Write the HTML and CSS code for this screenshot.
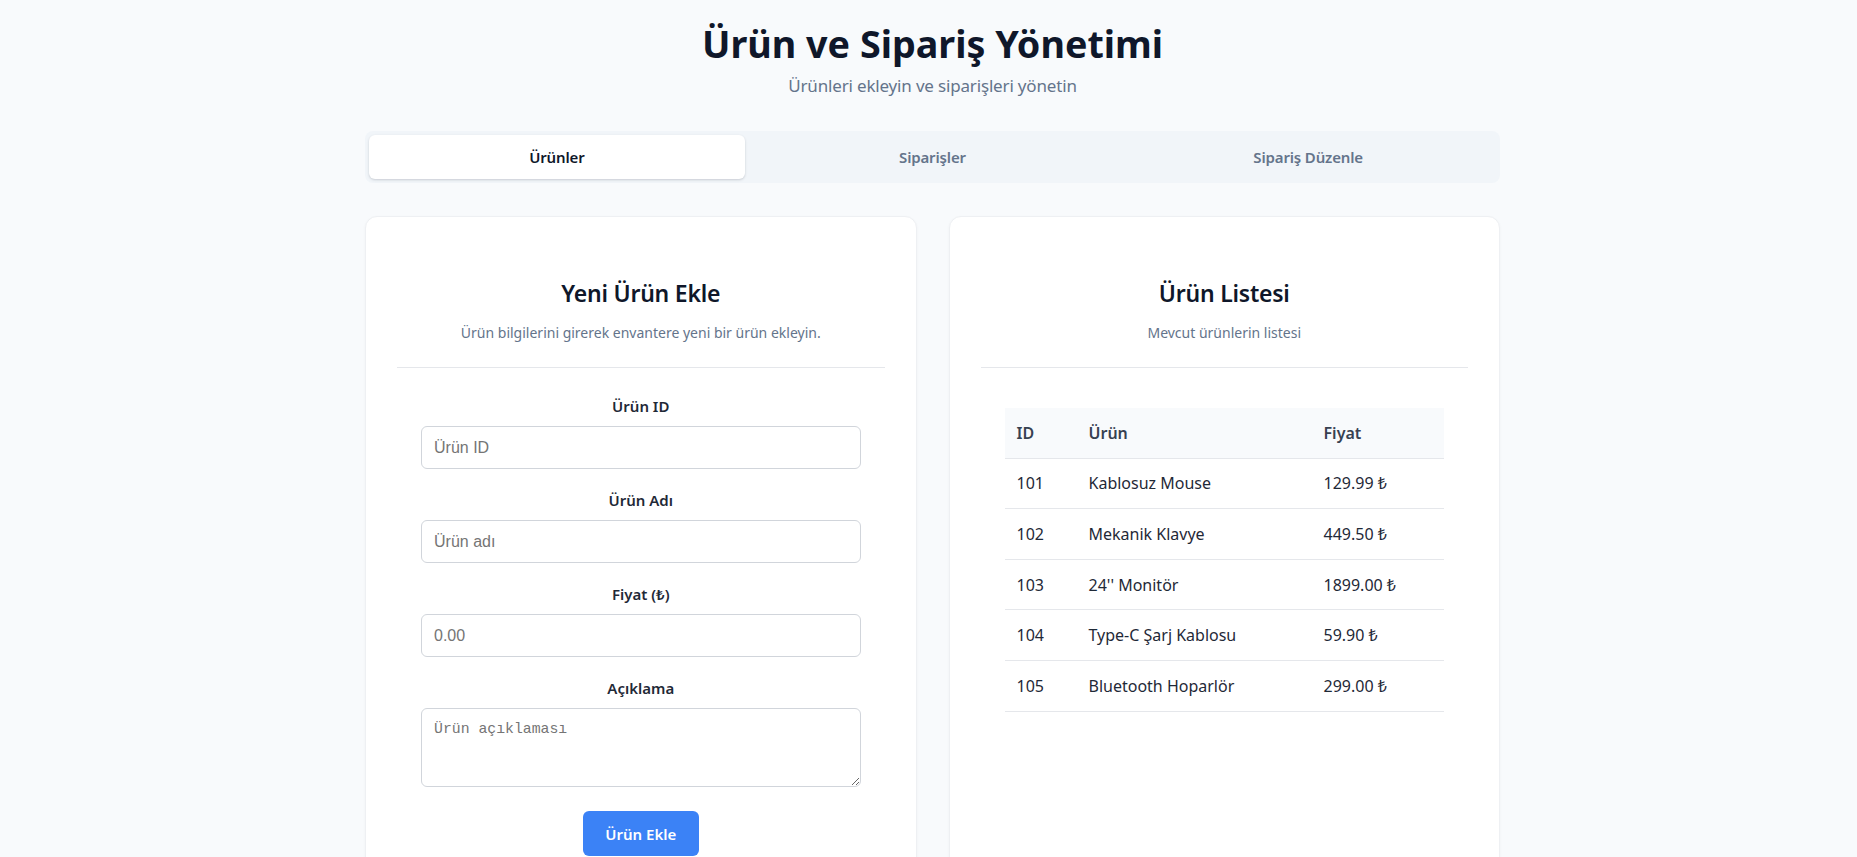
FILE: index.html
```html
<!DOCTYPE html>
<html lang="tr">
<head>
<meta charset="utf-8">
<title>Ürün ve Sipariş Yönetimi</title>
<link rel="stylesheet" href="styles.css">
</head>
<body>
<div class="page">
  <header class="hero">
    <h1 class="title">Ürün ve Sipariş Yönetimi</h1>
    <p class="subtitle">Ürünleri ekleyin ve siparişleri yönetin</p>
  </header>

  <nav class="tabs">
    <button class="tab tab-active">Ürünler</button>
    <button class="tab">Siparişler</button>
    <button class="tab">Sipariş Düzenle</button>
  </nav>

  <main class="grid">
    <section class="card">
      <div class="card-header">
        <h2 class="card-title">Yeni Ürün Ekle</h2>
        <p class="card-desc">Ürün bilgilerini girerek envantere yeni bir ürün ekleyin.</p>
      </div>
      <form class="form">
        <div class="field">
          <label class="label" for="pid">Ürün ID</label>
          <input class="input" id="pid" type="text" placeholder="Ürün ID">
        </div>
        <div class="field">
          <label class="label" for="pname">Ürün Adı</label>
          <input class="input" id="pname" type="text" placeholder="Ürün adı">
        </div>
        <div class="field">
          <label class="label" for="pprice">Fiyat (₺)</label>
          <input class="input" id="pprice" type="text" placeholder="0.00">
        </div>
        <div class="field">
          <label class="label" for="pdesc">Açıklama</label>
          <textarea class="textarea" id="pdesc" placeholder="Ürün açıklaması"></textarea>
        </div>
        <div class="actions">
          <button type="button" class="btn">Ürün Ekle</button>
        </div>
      </form>
    </section>

    <section class="card">
      <div class="card-header">
        <h2 class="card-title">Ürün Listesi</h2>
        <p class="card-desc">Mevcut ürünlerin listesi</p>
      </div>
      <div class="table-wrap">
        <table class="table">
          <colgroup>
            <col class="col-id">
            <col class="col-name">
            <col class="col-price">
          </colgroup>
          <thead>
            <tr><th>ID</th><th>Ürün</th><th>Fiyat</th></tr>
          </thead>
          <tbody>
            <tr><td>101</td><td>Kablosuz Mouse</td><td>129.99 ₺</td></tr>
            <tr><td>102</td><td>Mekanik Klavye</td><td>449.50 ₺</td></tr>
            <tr><td>103</td><td>24'' Monitör</td><td>1899.00 ₺</td></tr>
            <tr><td>104</td><td>Type-C Şarj Kablosu</td><td>59.90 ₺</td></tr>
            <tr><td>105</td><td>Bluetooth Hoparlör</td><td>299.00 ₺</td></tr>
          </tbody>
        </table>
      </div>
    </section>
  </main>
</div>
</body>
</html>
```

FILE: styles.css
```css
* { box-sizing: border-box; }

html, body {
  margin: 0;
  padding: 0;
  background: #f8fafc;
}

body {
  font-family: "Noto Sans", "Open Sans", sans-serif;
  color: #0f172a;
}

.page {
  padding: 24px 0 40px 8px;
}

.hero {
  text-align: center;
}

.title {
  margin: 0;
  font-size: 37.7px;
  line-height: 40px;
  font-weight: 700;
  color: #0f172a;
}

.subtitle {
  margin: 8px 0 0;
  font-size: 17px;
  line-height: 28px;
  color: #64748b;
  letter-spacing: -0.01em;
}

.tabs {
  width: 1135px;
  margin: 31px auto 0;
  display: grid;
  grid-template-columns: 1fr 1fr 1fr;
  padding: 4px;
  background: #f1f5f9;
  border-radius: 8px;
}

.tab {
  height: 44px;
  border: 0;
  background: transparent;
  font-family: inherit;
  font-size: 15px;
  font-weight: 600;
  color: #64748b;
  border-radius: 6px;
  cursor: pointer;
  letter-spacing: -0.01em;
}

.tab-active {
  background: #ffffff;
  color: #0f172a;
  box-shadow: 0 1px 3px rgba(15, 23, 42, 0.12), 0 1px 2px rgba(15, 23, 42, 0.06);
}

.grid {
  width: 1135px;
  margin: 33px auto 0;
  display: grid;
  grid-template-columns: 1fr 1fr;
  gap: 32px;
}

.card {
  background: #ffffff;
  border: 1px solid #eef0f3;
  border-radius: 12px;
  box-shadow: 0 1px 3px rgba(15, 23, 42, 0.04);
  padding: 0 31px 32px;
}

.card-header {
  text-align: center;
  padding: 60px 0 24px;
  border-bottom: 1px solid #e5e7eb;
}

.card-title {
  margin: 0;
  font-size: 23px;
  line-height: 32px;
  font-weight: 600;
  color: #0f172a;
  letter-spacing: -0.01em;
}

.card-desc {
  margin: 14px 0 0;
  font-size: 14px;
  line-height: 20px;
  color: #64748b;
}

.form {
  padding: 26px 24px 0;
  display: flex;
  flex-direction: column;
  gap: 19px;
}

.field {
  display: flex;
  flex-direction: column;
  gap: 8px;
}

.label {
  text-align: center;
  font-size: 15px;
  line-height: 24px;
  font-weight: 600;
  color: #1f2937;
}

.input,
.textarea {
  width: 100%;
  border: 1px solid #d1d5db;
  border-radius: 6px;
  background: #ffffff;
  color: #111827;
}

.input {
  height: 43px;
  padding: 0 12px;
  font-family: "Liberation Sans", Arial, sans-serif;
  font-size: 16px;
}

.textarea {
  height: 79px;
  padding: 12px 12px;
  font-family: "Liberation Mono", "DejaVu Sans Mono", monospace;
  font-size: 14.8px;
  resize: vertical;
}

.input::placeholder,
.textarea::placeholder {
  color: #757575;
}

.actions {
  display: flex;
  justify-content: center;
  padding-top: 5px;
}

.btn {
  width: 116px;
  height: 45px;
  border: 0;
  border-radius: 6px;
  background: #3b82f6;
  color: #ffffff;
  font-family: inherit;
  font-size: 15px;
  font-weight: 600;
  cursor: pointer;
}

.table-wrap {
  padding: 40px 24px 0;
}

.table {
  width: 100%;
  border-collapse: collapse;
  font-size: 16px;
  table-layout: fixed;
}

.col-id { width: 72px; }
.col-name { width: 235px; }
.col-price { width: auto; }

.table th,
.table td {
  text-align: left;
  padding: 12.8px 12px;
  line-height: 24px;
  border-bottom: 1px solid #e5e7eb;
}

.table th {
  background: #f8fafc;
  font-weight: 600;
  color: #374151;
}

.table td {
  color: #1f2937;
}
```
